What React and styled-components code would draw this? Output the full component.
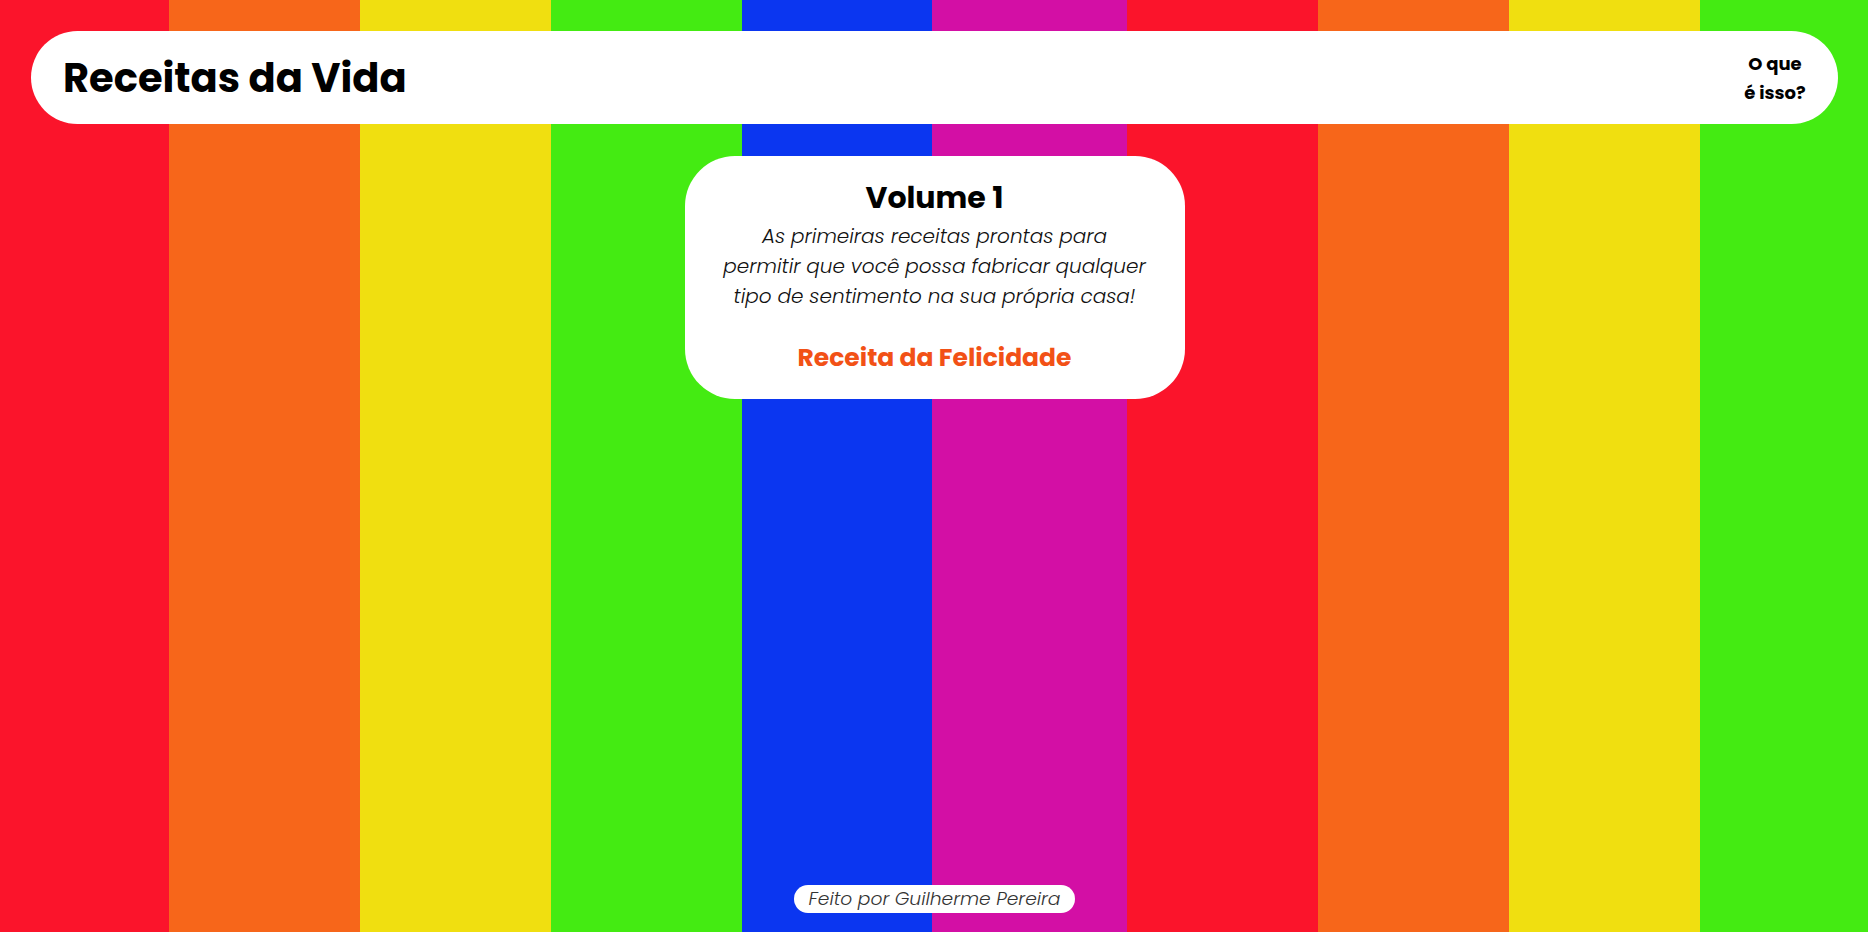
import React from "react";
import styled, { createGlobalStyle } from "styled-components";

const GlobalStyle = createGlobalStyle`
  * { box-sizing: border-box; }
  html, body { margin: 0; padding: 0; }
  body { font-family: "Poppins", "Inter", "Noto Sans", sans-serif; color: #000; }
`;

const RED = "#fb142b";
const ORANGE = "#f7661a";
const YELLOW = "#f0df10";
const GREEN = "#44eb12";
const BLUE = "#0b36f0";
const MAGENTA = "#d30fa5";

const Page = styled.div`
  min-height: 100vh;
  display: flex;
  flex-direction: column;
  align-items: center;
  padding: 31px 30px 19px 31px;
  background: linear-gradient(
    to right,
    ${RED} 0 169px,
    ${ORANGE} 169px 360px,
    ${YELLOW} 360px 551px,
    ${GREEN} 551px 742px,
    ${BLUE} 742px 932px,
    ${MAGENTA} 932px 1127px,
    ${RED} 1127px 1318px,
    ${ORANGE} 1318px 1509px,
    ${YELLOW} 1509px 1700px,
    ${GREEN} 1700px 100%
  );
`;

const Header = styled.header`
  width: 100%;
  height: 93px;
  background: #fff;
  border-radius: 47px;
  display: flex;
  align-items: center;
  justify-content: space-between;
  padding: 0 29px 0 32px;
`;

const Brand = styled.h1`
  margin: 0;
  font-size: 40px;
  font-weight: 700;
  line-height: 1;
`;

const NavLink = styled.a`
  width: 68px;
  text-align: center;
  font-size: 18px;
  font-weight: 700;
  line-height: 29px;
  color: #000;
  text-decoration: none;
  cursor: pointer;
`;

const Card = styled.section`
  margin-top: 32px;
  width: 500px;
  height: 243px;
  background: #fff;
  border-radius: 50px;
  display: flex;
  flex-direction: column;
  align-items: center;
  padding: 24px 30px 0;
  text-align: center;
`;

const CardTitle = styled.h2`
  margin: 0;
  font-size: 30px;
  font-weight: 700;
  line-height: 36px;
`;

const CardText = styled.p`
  margin: 5px 0 0;
  font-size: 20px;
  font-weight: 300;
  font-style: italic;
  line-height: 30px;
  color: #111;
`;

const CardLink = styled.a`
  margin-top: 29px;
  font-size: 25px;
  font-weight: 700;
  line-height: 36px;
  color: #f25116;
  text-decoration: none;
  cursor: pointer;
`;

const Footer = styled.footer`
  margin-top: auto;
  background: #fff;
  border-radius: 14px;
  height: 28px;
  width: 281px;
  display: flex;
  align-items: center;
  justify-content: center;
  font-size: 18.7px;
  font-weight: 300;
  font-style: italic;
  line-height: 1;
  color: #333;
`;

export default function App() {
  return (
    <>
      <GlobalStyle />
      <Page>
        <Header>
          <Brand>Receitas da Vida</Brand>
          <NavLink>O que é isso?</NavLink>
        </Header>
        <Card>
          <CardTitle>Volume 1</CardTitle>
          <CardText>
            As primeiras receitas prontas para
            <br />
            permitir que você possa fabricar qualquer
            <br />
            tipo de sentimento na sua própria casa!
          </CardText>
          <CardLink>Receita da Felicidade</CardLink>
        </Card>
        <Footer>Feito por Guilherme Pereira</Footer>
      </Page>
    </>
  );
}
